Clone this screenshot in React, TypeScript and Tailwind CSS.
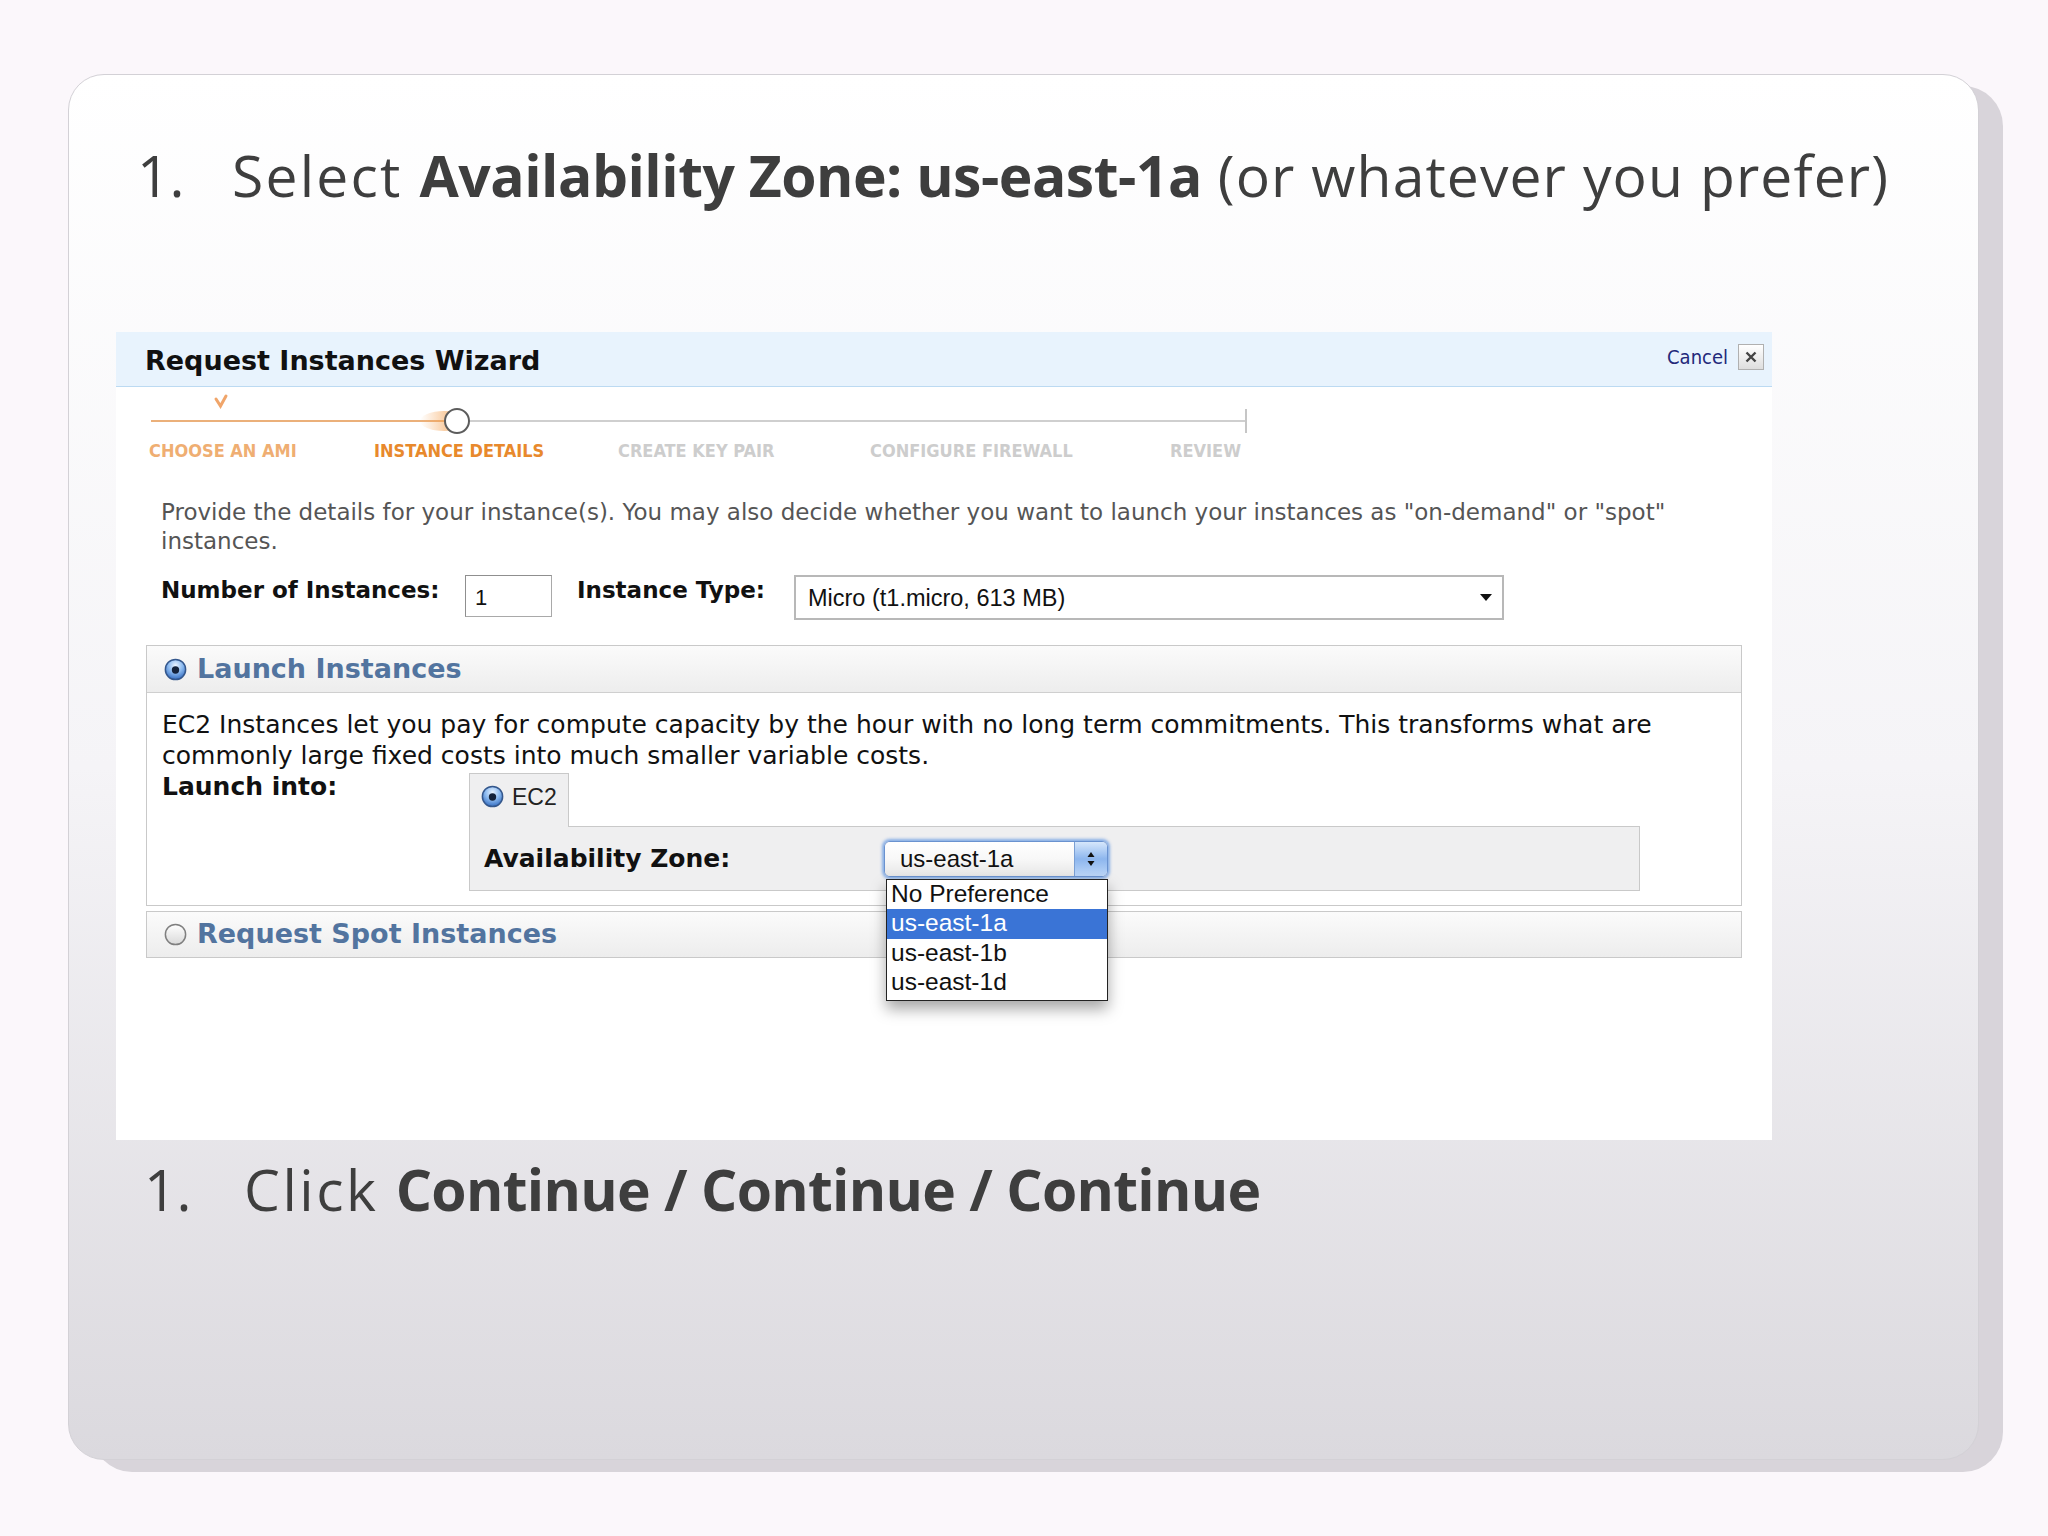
import React from "react";

const tahoma = "font-[family-name:'DejaVu_Sans_Condensed','DejaVu_Sans',sans-serif]";
const verdana = "font-[family-name:'DejaVu_Sans',sans-serif]";
const helv = "font-[family-name:'Liberation_Sans',Arial,sans-serif]";
const gothic = "font-[family-name:'Open_Sans',sans-serif]";

function Radio({ on, size = 23 }: { on?: boolean; size?: number }) {
  if (on) {
    return (
      <svg width={size} height={size} viewBox="0 0 20 20" className="shrink-0">
        <defs>
          <radialGradient id="radioOn" cx="50%" cy="30%" r="70%">
            <stop offset="0" stopColor="#eaf4ff" />
            <stop offset="0.5" stopColor="#8dbbf0" />
            <stop offset="1" stopColor="#336cc0" />
          </radialGradient>
        </defs>
        <circle cx="10" cy="10" r="8.8" fill="url(#radioOn)" stroke="#34578c" strokeWidth="1.3" />
        <circle cx="10" cy="10.4" r="3.2" fill="#14223a" />
      </svg>
    );
  }
  return (
    <svg width={size} height={size} viewBox="0 0 20 20" className="shrink-0">
      <defs>
        <linearGradient id="radioOff" x1="0" y1="0" x2="0" y2="1">
          <stop offset="0" stopColor="#ffffff" />
          <stop offset="1" stopColor="#d9d9d9" />
        </linearGradient>
      </defs>
      <circle cx="10" cy="10" r="8.8" fill="url(#radioOff)" stroke="#7f7f7f" strokeWidth="1.3" />
    </svg>
  );
}

function Stepper() {
  return (
    <div>
      <svg width="1140" height="53" className="block">
        <defs>
          <linearGradient id="stepGlow" x1="0" y1="0" x2="1" y2="0">
            <stop offset="0" stopColor="#f6a75a" stopOpacity="0" />
            <stop offset="1" stopColor="#f19640" stopOpacity="0.95" />
          </linearGradient>
        </defs>
        <line x1="35" y1="34" x2="330" y2="34" stroke="#ebb07a" strokeWidth="2" />
        <ellipse cx="328" cy="34" rx="24" ry="10" fill="url(#stepGlow)" />
        <line x1="352" y1="34" x2="1130" y2="34" stroke="#cfcfcf" strokeWidth="2" />
        <line x1="1130" y1="22" x2="1130" y2="46" stroke="#c6c6c6" strokeWidth="2" />
        <circle cx="341" cy="34" r="12" fill="#ffffff" stroke="#5c5c5c" strokeWidth="2" />
        <path d="M100 12 L104.5 19 L110 9" stroke="#f0a56a" strokeWidth="3" fill="none" strokeLinecap="round" />
      </svg>
      <div className={`flex h-[22px] items-center pl-[33px] ${tahoma} text-[18px] font-bold leading-[22px]`}>
        <span className="w-[225px] text-[#efae72]">CHOOSE AN AMI</span>
        <span className="w-[244px] text-[#e8892c]">INSTANCE DETAILS</span>
        <span className="w-[252px] text-[#cdcdcd]">CREATE KEY PAIR</span>
        <span className="w-[300px] text-[#cdcdcd]">CONFIGURE FIREWALL</span>
        <span className="text-[#cdcdcd]">REVIEW</span>
      </div>
    </div>
  );
}

function ZoneSelect() {
  return (
    <div className="relative">
      <div className="flex h-[36px] w-[224px] overflow-hidden rounded-[6px] border border-[#6a92cf] shadow-[0_0_3px_2px_rgba(88,146,225,0.7)]">
        <div className={`flex-1 bg-gradient-to-b from-white via-[#f8f8f8] to-[#e6e6e6] pl-[15px] ${helv} text-[24px] leading-[34px] text-[#111]`}>
          us-east-1a
        </div>
        <div className="flex w-[33px] items-center justify-center border-l border-[#7a9fd4] bg-gradient-to-b from-[#d6e7fb] via-[#8db6ee] to-[#bcd6f7]">
          <svg width="10" height="18" viewBox="0 0 10 18">
            <path d="M5 2 L8.5 7 L1.5 7 Z" fill="#111" />
            <path d="M5 16 L8.5 11 L1.5 11 Z" fill="#111" />
          </svg>
        </div>
      </div>
      <div className={`absolute left-[2px] top-[38px] z-20 w-[222px] border border-[#222] bg-white pb-[2px] shadow-[0_8px_14px_rgba(0,0,0,0.35)] ${helv} text-[24.5px] text-[#111]`}>
        <div className="h-[29.5px] pl-[4px] leading-[28px]">No Preference</div>
        <div className="h-[29.5px] bg-[#3a74d6] pl-[4px] leading-[28px] text-white">us-east-1a</div>
        <div className="h-[29.5px] pl-[4px] leading-[28px]">us-east-1b</div>
        <div className="h-[29.5px] pl-[4px] leading-[28px]">us-east-1d</div>
      </div>
    </div>
  );
}

function Wizard() {
  return (
    <div className="ml-[47px] mt-[128px] h-[808px] w-[1656px] bg-white">
      <div className="flex h-[55px] items-center justify-between border-b border-[#bcdaf2] bg-[#e8f3fd] pl-[29px] pr-[8px]">
        <div className={`${verdana} pt-[4px] text-[27px] font-bold text-[#111]`}>Request Instances Wizard</div>
        <div className="-mt-[4px] flex items-center gap-[10px]">
          <span className={`${tahoma} text-[20px] text-[#23287a]`}>Cancel</span>
          <span className="flex h-[26px] w-[26px] items-center justify-center border border-[#b0b0b0] bg-gradient-to-b from-white to-[#dedede]">
            <svg width="14" height="14" viewBox="0 0 14 14">
              <path d="M2.5 2.5 L11.5 11.5 M11.5 2.5 L2.5 11.5" stroke="#444" strokeWidth="2.4" />
            </svg>
          </span>
        </div>
      </div>

      <Stepper />

      <p className={`mt-[36px] whitespace-nowrap pl-[45px] ${verdana} text-[23px] leading-[29px] text-[#555]`}>
        Provide the details for your instance(s). You may also decide whether you want to launch your instances as "on-demand" or "spot"
        <br />
        instances.
      </p>

      <div className={`mt-[19px] flex items-start pl-[45px] ${verdana} text-[23px] leading-[30px] text-[#111]`}>
        <span className="w-[304px] font-bold">Number of Instances:</span>
        <div className={`h-[42px] w-[87px] border border-[#a9a9a9] border-l-[#8f8f8f] border-t-[#8f8f8f] bg-white pl-[9px] ${helv} text-[22px] leading-[44px]`}>
          1
        </div>
        <span className="ml-[25px] w-[217px] font-bold">Instance Type:</span>
        <div className={`flex h-[45px] w-[710px] items-center justify-between border-2 border-[#b8b8b8] bg-white pl-[12px] pr-[10px] ${helv} text-[23.5px]`}>
          <span>Micro (t1.micro, 613 MB)</span>
          <svg width="12" height="8" viewBox="0 0 12 8">
            <path d="M0 0 L12 0 L6 7 Z" fill="#111" />
          </svg>
        </div>
      </div>

      <div className="mx-[30px] mt-[25px] border border-[#c9c9c9]">
        <div className="flex h-[47px] items-center gap-[10px] border-b border-[#cfcfcf] bg-gradient-to-b from-[#fbfbfb] to-[#ededed] pl-[17px]">
          <Radio on />
          <span className={`${verdana} text-[27px] font-bold text-[#52749f]`}>Launch Instances</span>
        </div>
        <div className={`px-[15px] pb-[14px] pt-[16px] ${verdana} text-[25px] leading-[31px] text-[#111]`}>
          <p className="whitespace-nowrap">
            EC2 Instances let you pay for compute capacity by the hour with no long term commitments. This transforms what are
            <br />
            commonly large fixed costs into much smaller variable costs.
          </p>
          <div className="flex">
            <span className="w-[307px] font-bold">Launch into:</span>
            <div className="mt-[2px] flex flex-col">
              <div className="relative z-10 -mb-px flex h-[54px] w-[100px] items-start gap-[8px] border border-b-0 border-[#c9c9c9] bg-[#efeff0] pl-[11px] pt-[11px]">
                <Radio on />
                <span className={`${helv} text-[23px] leading-[24px] text-[#222]`}>EC2</span>
              </div>
              <div className="flex h-[65px] w-[1171px] items-center border border-[#c9c9c9] bg-[#efeff0] pl-[14px]">
                <span className="w-[400px] font-bold">Availability Zone:</span>
                <ZoneSelect />
              </div>
            </div>
          </div>
        </div>
      </div>

      <div className="mx-[30px] mt-[5px] flex h-[47px] items-center gap-[10px] border border-[#c9c9c9] bg-gradient-to-b from-[#fbfbfb] to-[#ededed] pl-[17px]">
        <Radio />
        <span className={`${verdana} text-[27px] font-bold text-[#52749f]`}>Request Spot Instances</span>
      </div>
    </div>
  );
}

export default function App() {
  return (
    <div className="h-[1536px] w-[2048px] overflow-hidden bg-[#fbf7fb] pl-[68px] pt-[74px]">
      <div className="relative h-[1386px] w-[1911px]">
        <div className="absolute left-[24px] top-[12px] h-full w-full rounded-[40px] bg-[#d8d4da]" />
        <div className="relative h-full w-full overflow-hidden rounded-[36px] border border-[#d3d1d6] bg-gradient-to-b from-white via-[#f5f4f7] to-[#dbd9de]">
          <h1 className={`${gothic} flex whitespace-nowrap pl-[68px] pt-[72px] text-[57px] font-normal leading-[57px] text-[#3e3e3e]`}>
            <span className="w-[95px]">1.</span>
            <span>
              <span className="tracking-[2.2px]">Select </span>
              <b className="font-bold tracking-[-0.5px]">Availability Zone: us-east-1a</b>
              <span className="tracking-[1.1px]"> (or whatever you prefer)</span>
            </span>
          </h1>

          <Wizard />

          <div className={`${gothic} mt-[21px] flex whitespace-nowrap pl-[75px] text-[57px] font-normal leading-[57px] text-[#3e3e3e]`}>
            <span className="w-[100px]">1.</span>
            <span className="tracking-[2.5px]">
              Click <b className="font-bold tracking-[-0.7px]">Continue / Continue / Continue</b>
            </span>
          </div>
        </div>
      </div>
    </div>
  );
}
